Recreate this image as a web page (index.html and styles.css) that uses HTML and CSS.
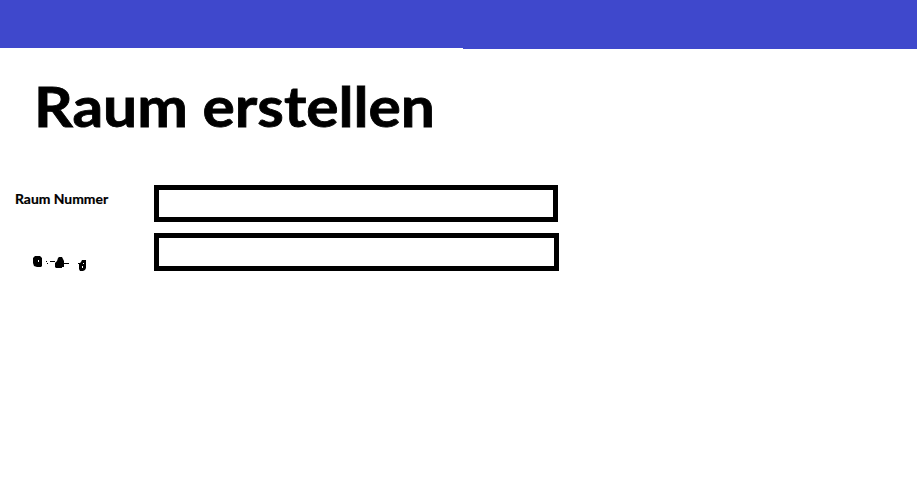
FILE: index.html
```html
<!DOCTYPE html>
<html lang="de">
<head>
<meta charset="utf-8">
<title>Raum erstellen</title>
<link rel="stylesheet" href="styles.css">
</head>
<body>
<header class="bar"></header>
<main>
<h1 class="title">Raum erstellen</h1>
<form class="form">
<label class="label" for="number">Raum Nummer</label>
<input class="field" id="number" type="text">
<svg class="scribble" width="56" height="17" viewBox="32 255 56 17" aria-hidden="true">
<path fill-rule="evenodd" d="M35 256h5l2 2v8l-1 1h-4l-3-1-1-3v-5zM38 260h1v2h-1z"/>
<path d="M46 261h1v1h-1zM47 263h1v1h-1zM50 261h5v1h-5zM64 263h5v1h-5zM78 263h3v1h-3z"/>
<path d="M58 258l1-1h3l1 2 1 2v6h-2v1h-6l-1-1v-4l2-2z"/>
<path fill-rule="evenodd" d="M82 260h4v8l-1 2-2 1h-3l-1-2v-5l2-2zM83 263h1v1h-1zM82 266h1v2h-1z"/>
</svg>
<input class="field field-last" type="text" aria-label="Beschreibung">
</form>
</main>
</body>
</html>
```
FILE: styles.css
```css
body {
  margin: 0;
  background: #fff;
  color: #000;
  font-family: Lato, "Open Sans", sans-serif;
}
.bar {
  height: 49px;
  background: linear-gradient(#3f48cc, #3f48cc) 0 0 / 100% 48px no-repeat,
    linear-gradient(#3f48cc, #3f48cc) 100% 100% / 454px 1px no-repeat;
}
.title {
  margin: 22px 0 0 34px;
  width: 400px;
  height: 70px;
  font-size: 56px;
  line-height: 70px;
  font-weight: 700;
  white-space: nowrap;
  -webkit-text-stroke: 0.8px #000;
  transform: scaleX(1.08);
  transform-origin: 0 0;
}
.form {
  display: grid;
  grid-template-columns: 139px 405px;
  grid-template-rows: 37px 38px;
  row-gap: 11px;
  margin: 44px 0 0 15px;
}
.label {
  width: 100px;
  font-size: 13px;
  line-height: 16px;
  font-weight: 700;
  padding-top: 6px;
  white-space: nowrap;
  -webkit-text-stroke: 0.2px #000;
  transform: scaleX(1.07);
  transform-origin: 0 0;
}
.field {
  box-sizing: border-box;
  width: 404px;
  height: 37px;
  margin: 0;
  padding: 0 6px;
  border: 5px solid #000;
  border-radius: 0;
  background: #fff;
  font: inherit;
  outline: 0;
}
.field-last {
  width: 405px;
  height: 38px;
}
.scribble {
  display: block;
  margin: 22px 0 0 17px;
}
```
